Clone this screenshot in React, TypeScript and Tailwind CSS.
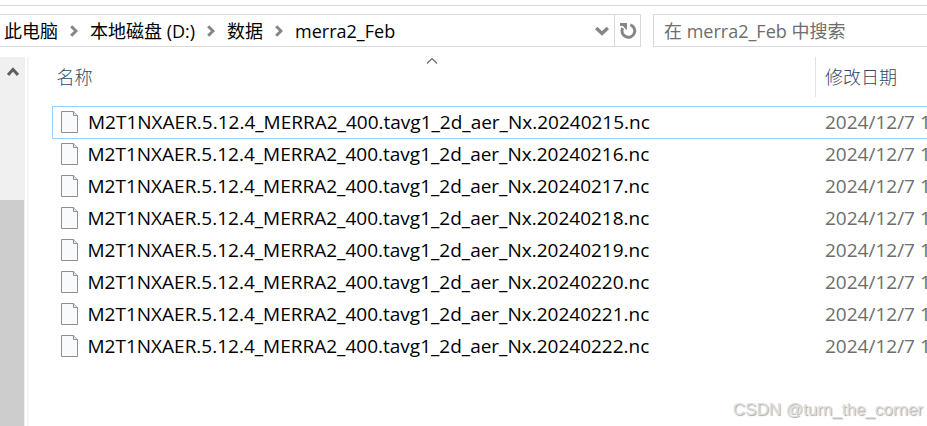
import { useState } from 'react';

const CRUMBS = ['此电脑', '本地磁盘 (D:)', '数据', 'merra2_Feb'];

const DAYS = ['20240215', '20240216', '20240217', '20240218', '20240219', '20240220', '20240221', '20240222'];

const FILES = DAYS.map((day) => ({
  name: `M2T1NXAER.5.12.4_MERRA2_400.tavg1_2d_aer_Nx.${day}.nc`,
  modified: '2024/12/7 1',
}));

export default function App() {
  const [selected, setSelected] = useState(FILES[0].name);

  return (
    <div className="relative flex min-h-screen flex-col overflow-hidden bg-white pt-[5px] font-['Open_Sans','Noto_Sans_CJK_SC',sans-serif] text-lg text-black">
      <header className="flex border-t border-[#d9d9d9] pt-2">
        <AddressBar />
        <SearchBox />
      </header>

      <main className="mt-[10px] flex flex-1">
        <ScrollBar />
        <div className="ml-0.5 w-0.5 shrink-0 bg-[#f5f5f5]" />
        <div className="min-w-0 flex-1 pl-[23px]">
          <table className="w-full table-fixed border-collapse text-left">
            <thead>
              <tr>
                <th className="p-0 pb-[9px] font-light">
                  <div className="relative flex h-10 items-center border-r border-[#e2e2e2] pl-1 text-[#2f4768]">
                    <SortArrow />
                    名称
                  </div>
                </th>
                <th className="w-[111px] p-0 pb-[9px] font-light">
                  <div className="flex h-10 items-center pl-[9px] whitespace-nowrap text-[#2f4768]">修改日期</div>
                </th>
              </tr>
            </thead>
            <tbody className="text-[19px]">
              {FILES.map((file) => (
                <tr
                  key={file.name}
                  onClick={() => setSelected(file.name)}
                  className={
                    file.name === selected
                      ? 'h-8 border border-r-0 border-[#99d1ff]'
                      : 'h-8'
                  }>
                  <td className="overflow-hidden p-0 pb-0.5">
                    <div className="flex items-center gap-[9px] pl-2 leading-7 whitespace-nowrap">
                      <FileIcon />
                      {file.name}
                    </div>
                  </td>
                  <td className="overflow-hidden p-0 pb-0.5 pl-[9px] leading-7 whitespace-nowrap text-[#6d6d6d]">
                    {file.modified}
                  </td>
                </tr>
              ))}
            </tbody>
          </table>
        </div>
      </main>

      <p className="absolute right-1 bottom-1 font-['Liberation_Sans',sans-serif] text-[17px] leading-6 text-[#dedede] [text-shadow:1px_1px_1px_#a8a8a8]">
        CSDN @turn_the_corner
      </p>
    </div>
  );
}

function AddressBar() {
  return (
    <div className="flex h-[33px] min-w-0 flex-1 border-y border-r border-[#d9d9d9]">
      <nav className="flex min-w-0 flex-1 items-center overflow-hidden pl-1 whitespace-nowrap">
        {CRUMBS.map((crumb, i) => (
          <span key={crumb} className="flex items-center">
            {i > 0 && (
              <svg className="mx-3 h-3 w-2" viewBox="0 0 8 12" fill="none" stroke="#868686" strokeWidth="3">
                <path d="M1.2 1.2 6 6 1.2 10.8" />
              </svg>
            )}
            <a href="#">{crumb}</a>
          </span>
        ))}
      </nav>
      <button aria-label="以前的位置" className="flex w-6 items-center justify-center">
        <svg width="14" height="10" viewBox="0 0 14 10" fill="none" stroke="#868686" strokeWidth="3.4">
          <path d="m1.2 2 5.8 5.5L12.8 2" />
        </svg>
      </button>
      <button aria-label="刷新" className="flex w-[26px] items-center justify-center border-l border-[#d9d9d9]">
        <svg width="18" height="18" viewBox="0 0 18 18" fill="none">
          <path d="M11.4 2.8A6.4 6.4 0 1 1 3.6 6" stroke="#868686" strokeWidth="3" />
          <path d="M1 1H8V8L5.8 6.2 4 4H1Z" fill="#868686" />
        </svg>
      </button>
    </div>
  );
}

function SearchBox() {
  return (
    <input
      type="search"
      aria-label="搜索"
      placeholder="在 merra2_Feb 中搜索"
      className="ml-3 h-[33px] w-[274px] shrink-0 border border-r-0 border-[#d9d9d9] pl-[10px] outline-none placeholder:text-[#6d6d6d]"
    />
  );
}

function ScrollBar() {
  return (
    <div className="flex w-[25px] shrink-0 flex-col bg-[#f0f0f0]">
      <button aria-label="向上滚动" className="flex h-[29px] items-center justify-center">
        <svg width="12" height="10" viewBox="0 0 12 10" fill="none" stroke="#606060" strokeWidth="3">
          <path d="m1 8 5-5.5L11 8" />
        </svg>
      </button>
      <div className="mt-[114px] mr-px flex-1 bg-[#cdcdcd]" />
    </div>
  );
}

function SortArrow() {
  return (
    <svg
      className="absolute top-0 left-1/2 h-2 w-3 -translate-x-2"
      viewBox="0 0 12 8"
      fill="none"
      stroke="#6a6a6a"
      strokeWidth="1.2">
      <path d="m1 6.5 5-5 5 5" />
    </svg>
  );
}

function FileIcon() {
  return (
    <svg className="h-[22px] w-[18px] shrink-0" viewBox="0 0 18 22">
      <path d="M.5.5h12l4 4v17H.5Z" fill="#f9fafb" stroke="#8f8f8f" />
      <path d="M12.5.5v4h4" fill="#e4e4e4" stroke="#8f8f8f" />
    </svg>
  );
}
